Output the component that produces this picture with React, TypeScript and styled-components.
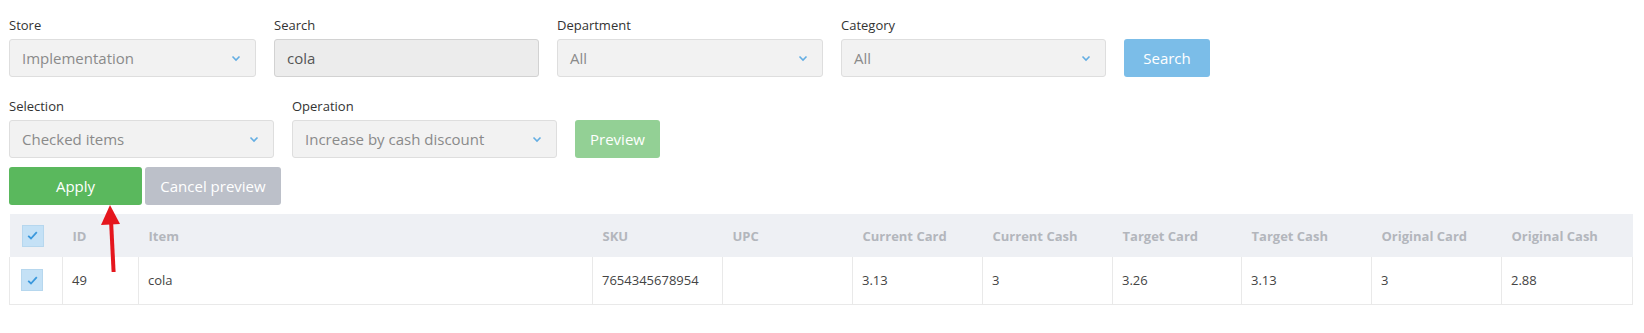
import React from "react";
import styled, { createGlobalStyle } from "styled-components";

const Global = createGlobalStyle`
  html, body { margin: 0; padding: 0; background: #ffffff; }
  body { font-family: "Open Sans", "Liberation Sans", sans-serif; color: #333; }
  * { box-sizing: border-box; }
`;

const Page = styled.div`
  position: relative;
  padding: 16px 0 0 9px;
  width: 1644px;
  height: 333px;
`;

const FilterRow = styled.div<{ $mb?: number }>`
  display: flex;
  align-items: flex-end;
  gap: 18px;
  margin-bottom: ${(p) => p.$mb ?? 0}px;
`;

const Field = styled.div<{ $w: number }>`
  display: flex;
  flex-direction: column;
  width: ${(p) => p.$w}px;
`;

const Label = styled.label`
  font-size: 13px;
  line-height: 18px;
  color: #333;
  margin-bottom: 5px;
`;

const SelectBox = styled.div`
  height: 38px;
  display: flex;
  align-items: center;
  justify-content: space-between;
  padding: 0 14px 0 12px;
  background: #f2f2f2;
  border: 1px solid #dedede;
  border-radius: 3px;
`;

const SelectText = styled.span`
  font-size: 15px;
  color: #8a8a8a;
`;

const TextInput = styled.div`
  height: 38px;
  display: flex;
  align-items: center;
  padding: 0 12px;
  background: #ececec;
  border: 1px solid #d2d2d2;
  border-radius: 3px;
  font-size: 15px;
  color: #555;
`;

const variants: Record<string, string> = {
  search: "#7bbde8",
  preview: "#93d095",
  apply: "#5ab85d",
  cancel: "#bcc0c9",
};

const Button = styled.button<{ $variant: string; $w: number }>`
  height: 38px;
  width: ${(p) => p.$w}px;
  border: none;
  border-radius: 3px;
  background: ${(p) => variants[p.$variant]};
  color: #ffffff;
  font-family: "Open Sans", "Liberation Sans", sans-serif;
  font-size: 15px;
  padding: 0;
  cursor: pointer;
`;

const ButtonRow = styled.div`
  display: flex;
  gap: 3px;
  margin-top: 9px;
  margin-bottom: 9px;
`;

const Table = styled.table`
  border-collapse: collapse;
  table-layout: fixed;
  width: 1623px;
  font-size: 13px;
`;

const Col = styled.col<{ $w: number }>`
  width: ${(p) => p.$w}px;
`;

const HeadCell = styled.th`
  height: 43px;
  background: #eef0f4;
  color: #b3b6bc;
  font-weight: 700;
  text-align: left;
  padding: 0 10px;
  white-space: nowrap;
`;

const Cell = styled.td`
  height: 47px;
  border: 1px solid #e9e9e9;
  border-top: none;
  color: #444;
  padding: 0 9px;
  white-space: nowrap;
`;

const CheckCell = styled.div`
  display: flex;
  align-items: center;
  padding-left: 2px;
`;

const CheckBox = styled.span`
  width: 22px;
  height: 22px;
  background: #c4e1f6;
  border: 1px solid #b6d7ee;
  display: inline-flex;
  align-items: center;
  justify-content: center;
`;

const Arrow = styled.svg`
  position: absolute;
  left: 99px;
  top: 204px;
`;

const Chevron = () => (
  <svg width="10" height="7" viewBox="0 0 10 7">
    <path d="M1.5 1.5 L5 5 L8.5 1.5" fill="none" stroke="#64aee3" strokeWidth="1.6" />
  </svg>
);

const Check = () => (
  <CheckBox>
    <svg width="11" height="9" viewBox="0 0 11 9">
      <path d="M1.2 4.8 L4 7.5 L9.8 1.2" fill="none" stroke="#3a98dc" strokeWidth="1.8" />
    </svg>
  </CheckBox>
);

const Select = ({ label, value, w }: { label: string; value: string; w: number }) => (
  <Field $w={w}>
    <Label>{label}</Label>
    <SelectBox>
      <SelectText>{value}</SelectText>
      <Chevron />
    </SelectBox>
  </Field>
);

const cols = [53, 76, 454, 130, 130, 130, 130, 129, 130, 130, 131];
const headers = ["", "ID", "Item", "SKU", "UPC", "Current Card", "Current Cash", "Target Card", "Target Cash", "Original Card", "Original Cash"];
const row = ["49", "cola", "7654345678954", "", "3.13", "3", "3.26", "3.13", "3", "2.88"];

export default function App() {
  return (
    <>
      <Global />
      <Page>
        <FilterRow $mb={20}>
          <Select label="Store" value="Implementation" w={247} />
          <Field $w={265}>
            <Label>Search</Label>
            <TextInput>cola</TextInput>
          </Field>
          <Select label="Department" value="All" w={266} />
          <Select label="Category" value="All" w={265} />
          <Button $variant="search" $w={86}>Search</Button>
        </FilterRow>
        <FilterRow>
          <Select label="Selection" value="Checked items" w={265} />
          <Select label="Operation" value="Increase by cash discount" w={265} />
          <Button $variant="preview" $w={85}>Preview</Button>
        </FilterRow>
        <ButtonRow>
          <Button $variant="apply" $w={133}>Apply</Button>
          <Button $variant="cancel" $w={136}>Cancel preview</Button>
        </ButtonRow>
        <Table>
          <colgroup>
            {cols.map((w, i) => (
              <Col key={i} $w={w} />
            ))}
          </colgroup>
          <thead>
            <tr>
              {headers.map((h, i) => (
                <HeadCell key={i}>
                  {i === 0 ? (
                    <CheckCell>
                      <Check />
                    </CheckCell>
                  ) : (
                    h
                  )}
                </HeadCell>
              ))}
            </tr>
          </thead>
          <tbody>
            <tr>
              <Cell>
                <CheckCell>
                  <Check />
                </CheckCell>
              </Cell>
              {row.map((v, i) => (
                <Cell key={i}>{v}</Cell>
              ))}
            </tr>
          </tbody>
        </Table>
        <Arrow width="24" height="70" viewBox="0 0 24 70">
          <path d="M12.2 20 L14.6 68" stroke="#e5161d" strokeWidth="4" fill="none" />
          <polygon points="2,21 21,20 11,1" fill="#e5161d" />
        </Arrow>
      </Page>
    </>
  );
}
